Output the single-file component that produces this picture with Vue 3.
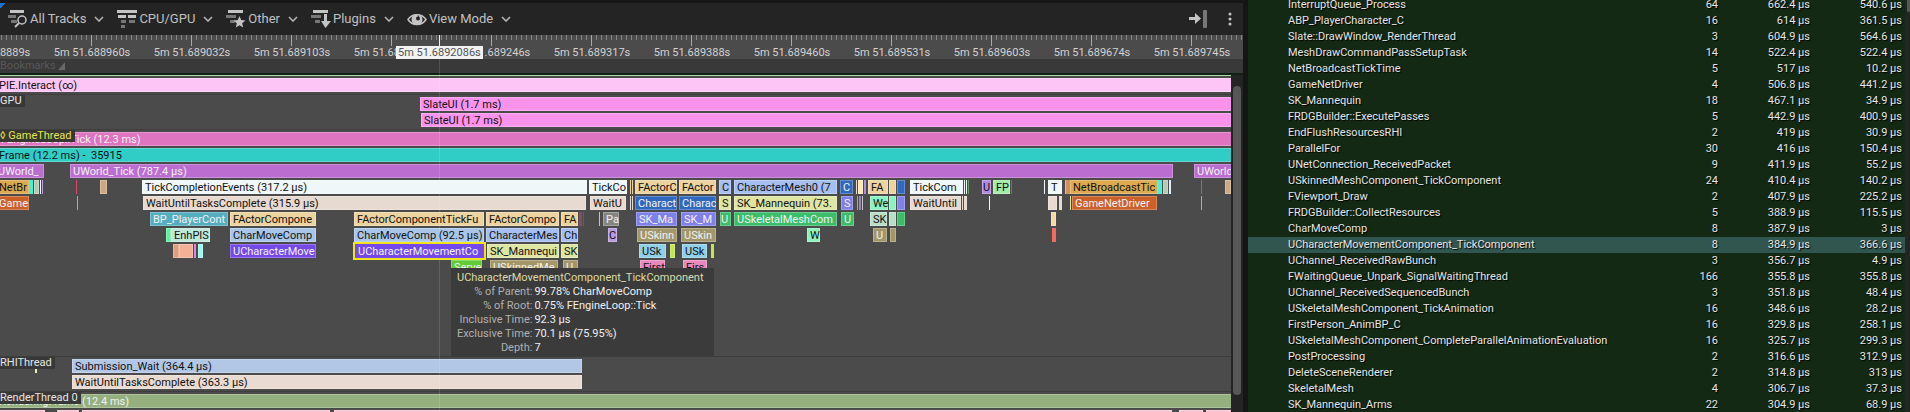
<script setup>
const SPAN = 1231

const ticks = [
  '5m 51.688889s', '5m 51.688960s', '5m 51.689032s', '5m 51.689103s', '5m 51.689175s',
  '5m 51.689246s', '5m 51.689317s', '5m 51.689388s', '5m 51.689460s', '5m 51.689531s',
  '5m 51.689603s', '5m 51.689674s', '5m 51.689745s', ''
]

// Each event: [start, end, colour, text, light text, selected]
const tan = '#ecd39f', wait = '#e7dad0', white = '#f0f7f9', blue = '#3068bd', sky = '#a6bff0'
const olive = '#a3976a', green = '#3bbd69', lime = '#dfe5a2', violet = '#7f80ea', mint = '#8bf2c0'

const tracks = [
  { id: 'pie', lanes: [[[-4, 1235, '#fdc5f5', 'PIE.Interact (∞)']]] },
  {
    id: 'gpu', label: 'GPU',
    lanes: [
      [[420, 1235, '#fb93ec', 'SlateUI (1.7 ms)']],
      [[421, 1235, '#fb93ec', 'SlateUI (1.7 ms)']]
    ]
  },
  {
    id: 'game', label: '◊ GameThread', tall: true,
    lanes: [
      [[-2, 1235, '#df74c0', 'FEngineLoop::Tick (12.3 ms)', true]],
      [[-4, 1235, '#30cdc6', 'Frame (12.2 ms) -  35915']],
      [[-5, 44, '#bb6dd0', 'UWorld_', true], [70, 1173, '#bb6dd0', 'UWorld_Tick (787.4 µs)', true], [1194, 1235, '#bb6dd0', 'UWorld', true]],
      [
        [-4, 29, '#dca850', 'NetBr'], [29, 33, '#4af0d0'], [34, 39, '#b5c9b0'], [40, 41, white], [42, 43, '#b9a0e8'],
        [76, 77, '#d84a66'], [100, 107, '#cda882'], [142, 587, white, 'TickCompletionEvents (317.2 µs)'],
        [589, 627, white, 'TickCo'], [630, 631, tan], [632, 633, tan], [635, 677, tan, 'FActorC'], [679, 716, tan, 'FActor'],
        [719, 731, sky, 'C'], [734, 837, sky, 'CharacterMesh0 (7'], [840, 853, blue, 'C', true],
        [856, 857, wait], [858, 863, '#ffe6ac'], [864, 866, '#b088e8'], [868, 888, tan, 'FA'], [889, 896, tan], [897, 905, blue],
        [910, 963, white, 'TickCom'], [964, 965, white], [966, 967, white], [968, 969, '#6a9a6a'],
        [982, 991, '#b088e0', 'U'], [993, 1010, '#a5eba8', 'FP'], [1011, 1012, '#a050b0'], [1044, 1045, white],
        [1048, 1062, white, 'T'], [1065, 1066, '#e0b0e0'], [1066, 1070, '#d09060'], [1070, 1158, '#dfa94f', 'NetBroadcastTic'],
        [1158, 1162, '#4af0d8'], [1163, 1168, '#b5c9b0'], [1169, 1171, '#d8f0ff'], [1201, 1202, '#d84a66'], [1225, 1231, '#cda882']
      ],
      [
        [-4, 29, '#cb6029', 'Game', true], [77, 78, '#a9a0e8'], [143, 586, wait, 'WaitUntilTasksComplete (315.9 µs)'],
        [590, 626, wait, 'WaitU'], [630, 631, wait], [632, 633, wait], [635, 677, blue, 'Charact', true], [679, 716, blue, 'Charac', true],
        [719, 731, lime, 'S'], [734, 837, lime, 'SK_Mannequin (73.'], [841, 853, violet, 'S', true],
        [857, 858, '#a9a0c8'], [859, 861, '#948ca8'], [862, 863, '#c8c0c8'], [870, 888, mint, 'We'], [889, 896, mint], [897, 905, violet],
        [910, 961, wait, 'WaitUntil'], [962, 963, wait], [964, 967, wait], [989, 990, white], [1048, 1057, wait], [1059, 1062, wait],
        [1070, 1071, '#d8e8a0'], [1072, 1157, '#cb6029', 'GameNetDriver', true], [1201, 1202, '#a9a0e8']
      ],
      [
        [150, 228, '#55adc0', 'BP_PlayerCont', true], [230, 316, tan, 'FActorCompone'], [354, 484, tan, 'FActorComponentTickFu'],
        [486, 559, tan, 'FActorCompo'], [561, 578, tan, 'FA'], [579, 582, '#8a4a68'], [583, 584, '#8a4a68'], [599, 600, '#7fe8c0'],
        [603, 619, '#858580', 'Pa', true], [636, 677, violet, 'SK_Ma', true], [681, 716, violet, 'SK_M', true],
        [720, 731, green, 'U', true], [734, 837, green, 'USkeletalMeshCom', true], [841, 854, green, 'U', true],
        [870, 887, '#b9dfc8', 'SK'], [889, 896, '#b9dfc8'], [897, 905, green], [1051, 1056, '#f3d9a0']
      ],
      [
        [166, 171, '#62f0a0'], [171, 210, '#bfe8da', 'EnhPIS'], [230, 316, '#a9c6e8', 'CharMoveComp'],
        [354, 484, '#a9c6e8', 'CharMoveComp (92.5 µs)'], [486, 559, sky, 'CharacterMes'], [561, 578, sky, 'Ch'], [608, 617, '#b89ae0', 'C'],
        [637, 677, olive, 'USkinn', true], [681, 716, olive, 'USkin', true], [807, 820, mint, 'W'],
        [873, 887, olive, 'U', true], [890, 896, olive], [1052, 1056, '#f86a60']
      ],
      [
        [173, 179, '#dca080'], [179, 193, '#f2b097'], [194, 196, '#dd88e0'], [198, 203, '#98f8ee'],
        [230, 316, '#7548ea', 'UCharacterMove', true], [355, 484, '#7548ea', 'UCharacterMovementCo', true, true],
        [487, 559, lime, 'SK_Mannequi'], [561, 578, lime, 'SK'], [639, 666, '#90cfe8', 'USk'], [670, 675, '#bfe850'],
        [682, 707, '#90cfe8', 'USk'], [711, 714, '#bfe850']
      ],
      [
        [451, 482, '#62cc38', 'Serve', true], [490, 558, olive, 'USkinnedMe', true], [563, 578, olive, 'U', true],
        [640, 665, '#e888bd', 'First'], [683, 707, '#e888bd', 'Firs']
      ]
    ]
  },
  {
    id: 'rhi', label: 'RHIThread', marker: true,
    lanes: [
      [[72, 582, '#b2c6e6', 'Submission_Wait (364.4 µs)']],
      [[72, 582, '#e9dbd1', 'WaitUntilTasksComplete (363.3 µs)']]
    ]
  },
  {
    id: 'render', label: 'RenderThread 0',
    lanes: [
      [[-4, 1235, '#95b07e', 'RenderingFrame (12.4 ms)', true]],
      [[-4, 45, '#f7c3d1'], [57, 79, '#f7c3d1'], [82, 330, '#f7c3d1'], [334, 1172, '#f7c3d1'], [1179, 1203, '#f7c3d1'], [1206, 1235, '#f7c3d1']]
    ]
  }
]

const place = (e) => ({
  left: (e[0] / SPAN) * 100 + '%',
  width: ((e[1] - e[0]) / SPAN) * 100 + '%',
  backgroundColor: e[2]
})

const details = [
  ['% of Parent:', '99.78% CharMoveComp'],
  ['% of Root:', '0.75% FEngineLoop::Tick'],
  ['Inclusive Time:', '92.3 µs'],
  ['Exclusive Time:', '70.1 µs (75.95%)'],
  ['Depth:', '7']
]

const timers = [
  ['InterruptQueue_Process', '64', '662.4', '540.6'],
  ['ABP_PlayerCharacter_C', '16', '614', '361.5'],
  ['Slate::DrawWindow_RenderThread', '3', '604.9', '564.6'],
  ['MeshDrawCommandPassSetupTask', '14', '522.4', '522.4'],
  ['NetBroadcastTickTime', '5', '517', '10.2'],
  ['GameNetDriver', '4', '506.8', '441.2'],
  ['SK_Mannequin', '18', '467.1', '34.9'],
  ['FRDGBuilder::ExecutePasses', '5', '442.9', '400.9'],
  ['EndFlushResourcesRHI', '2', '419', '30.9'],
  ['ParallelFor', '30', '416', '150.4'],
  ['UNetConnection_ReceivedPacket', '9', '411.9', '55.2'],
  ['USkinnedMeshComponent_TickComponent', '24', '410.4', '140.2'],
  ['FViewport_Draw', '2', '407.9', '225.2'],
  ['FRDGBuilder::CollectResources', '5', '388.9', '115.5'],
  ['CharMoveComp', '8', '387.9', '3'],
  ['UCharacterMovementComponent_TickComponent', '8', '384.9', '366.6'],
  ['UChannel_ReceivedRawBunch', '3', '356.7', '4.9'],
  ['FWaitingQueue_Unpark_SignalWaitingThread', '166', '355.8', '355.8'],
  ['UChannel_ReceivedSequencedBunch', '3', '351.8', '48.4'],
  ['USkeletalMeshComponent_TickAnimation', '16', '348.6', '28.2'],
  ['FirstPerson_AnimBP_C', '16', '329.8', '258.1'],
  ['USkeletalMeshComponent_CompleteParallelAnimationEvaluation', '16', '325.7', '299.3'],
  ['PostProcessing', '2', '316.6', '312.9'],
  ['DeleteSceneRenderer', '2', '314.8', '313'],
  ['SkeletalMesh', '4', '306.7', '37.3'],
  ['SK_Mannequin_Arms', '22', '304.9', '68.9']
]
const selectedTimer = 'UCharacterMovementComponent_TickComponent'

const menus = ['All Tracks', 'CPU/GPU', 'Other', 'Plugins', 'View Mode']
</script>

<template>
  <main class="insights">
    <section class="timing">
      <header class="toolbar">
        <button v-for="(m, i) in menus" :key="m" type="button" class="menu">
          <svg class="icon" viewBox="0 0 20 20" width="20" height="20" aria-hidden="true">
            <g v-if="i === 0">
              <path d="M2 1h14v3H2z" fill="#c4c4c4" /><path d="M0 6h8v3H0zM3 11h6v3H3z" fill="#777" />
              <circle cx="14" cy="11" r="4" fill="none" stroke="#c4c4c4" stroke-width="1.5" />
              <path d="M11 14l-4 4" stroke="#c4c4c4" stroke-width="2" />
            </g>
            <g v-else-if="i === 1">
              <path d="M0 1h20v3H0zM1 6h8v3H1zM11 6h8v3h-8z" fill="#c4c4c4" />
              <path d="M4 11h5v3H4zM12 11h6v3h-6zM4 16h4v3H4z" fill="#777" />
            </g>
            <g v-else-if="i === 2">
              <path d="M2 1h15v3H2z" fill="#c4c4c4" /><path d="M0 6h10v3H0zM4 11h5v3H4z" fill="#777" />
              <path d="M13.500 7l1.700 4 4.300.400-3.300 2.900 1 4.200-3.700-2.200-3.700 2.200 1-4.200-3.300-2.900 4.300-.400z" fill="#c4c4c4" />
            </g>
            <g v-else-if="i === 3">
              <path d="M2 1h15v3H2z" fill="#c4c4c4" /><path d="M0 6h10v3H0zM4 11h5v3H4z" fill="#777" />
              <path d="M13 5h3v7h4l-5.500 7L10 12h3z" fill="#c4c4c4" />
            </g>
            <g v-else>
              <path d="M1 10.500c4-6.500 14-6.500 18 0-4 6.500-14 6.500-18 0z" fill="none" stroke="#c4c4c4" stroke-width="1.500" />
              <path d="M10 5a5.500 5.500 0 1 0 5.500 5.500c0-2-1-4-3-5L11.500 9z" fill="#c4c4c4" />
              <circle cx="11" cy="9.500" r="2" fill="#242424" />
            </g>
          </svg>
          <span class="menu-text">{{ m }}</span>
          <svg viewBox="0 0 10 6" width="10" height="6" aria-hidden="true"><path d="M1 1l4 4 4-4" fill="none" stroke="#b4b4b4" stroke-width="1.6" /></svg>
        </button>
        <span class="spacer"></span>
        <button type="button" class="tool" aria-label="Auto scroll">
          <svg viewBox="0 0 20 18" width="20" height="18" aria-hidden="true">
            <path d="M0 7h6V3l6 5.500L6 14v-4H0z" fill="#c4c4c4" /><rect x="14" width="4" height="18" rx="1" fill="#777" />
          </svg>
        </button>
        <button type="button" class="tool" aria-label="More options">
          <svg viewBox="0 0 4 14" width="4" height="14" aria-hidden="true">
            <circle cx="2" cy="2" r="1.500" fill="#c4c4c4" /><circle cx="2" cy="7" r="1.500" fill="#c4c4c4" /><circle cx="2" cy="12" r="1.500" fill="#c4c4c4" />
          </svg>
        </button>
      </header>

      <div class="chart">
        <div class="ruler">
          <span v-for="(t, i) in ticks" :key="i" class="tick">{{ t }}</span>
        </div>
        <div class="bookmarks">Bookmarks<svg viewBox="0 0 8 8" width="8" height="8" aria-hidden="true"><path d="M7 0v8H0z" fill="#686868" /></svg></div>
        <div class="body">
          <div class="tracks">
            <div class="regions"></div>
            <div v-for="t in tracks" :key="t.id" class="track" :class="[t.id, { tall: t.tall }]">
              <div v-for="(lane, l) in t.lanes" :key="l" class="lane">
                <div
                  v-for="(e, n) in lane" :key="n" class="event"
                  :class="{ light: e[4], selected: e[5], tight: e[1] - e[0] < 12, sliver: e[1] - e[0] < 5 }" :style="place(e)"
                >{{ e[3] }}</div>
              </div>
              <span v-if="t.marker" class="marker"></span>
              <span v-if="t.label" class="label">{{ t.label }}</span>
            </div>
          </div>
          <div class="scroll"><div class="thumb"></div></div>
        </div>
        <div class="cursor"></div>
        <div class="stamp">5m 51.6892086s</div>
        <div class="tooltip" role="tooltip">
          <div class="tip-title">UCharacterMovementComponent_TickComponent</div>
          <dl class="tip-grid">
            <template v-for="d in details" :key="d[0]"><dt>{{ d[0] }}</dt><dd>{{ d[1] }}</dd></template>
          </dl>
        </div>
      </div>
    </section>

    <div class="splitter"></div>

    <section class="timers">
      <table>
        <colgroup><col /><col class="c-count" /><col class="c-time" /><col class="c-time" /></colgroup>
        <tbody>
          <tr v-for="r in timers" :key="r[0]" :class="{ current: r[0] === selectedTimer }">
            <td class="name">{{ r[0] }}</td><td>{{ r[1] }}</td><td>{{ r[2] }} µs</td><td>{{ r[3] }} µs</td>
          </tr>
        </tbody>
      </table>
      <div class="side"><div class="side-thumb"></div></div>
    </section>
  </main>
</template>

<style>
body { background: #151515; }
</style>

<style scoped>
.insights {
  display: grid;
  grid-template-columns: minmax(0, 1243fr) 5px minmax(0, 662fr);
  height: 100vh;
  overflow: hidden;
  font-family: Roboto, "Liberation Sans", sans-serif;
  font-size: 11px;
  line-height: 14px;
  color: #e6e6e6;
}
.timing { display: flex; flex-direction: column; min-height: 0; border-top: 3px solid #151515; }
.toolbar {
  display: flex;
  align-items: center;
  gap: 13px;
  height: 32px;
  flex: none;
  padding: 0 11px 0 8px;
  background: linear-gradient(135deg, #1673d4 4px, #242424 4px);
}
button { font: inherit; color: inherit; background: none; border: 0; padding: 0; display: flex; align-items: center; }
.menu { gap: 2px; font-size: 13px; color: #c0c0c0; }
.menu-text { margin-right: 6px; white-space: nowrap; }
.spacer { flex: 1; }
.tool { margin-left: 6px; }
.chart { position: relative; flex: 1; min-height: 0; display: flex; flex-direction: column; overflow: hidden; }
.ruler { display: flex; height: 24px; flex: none; overflow: hidden; background: #4b4b4b; color: #d2d2d2; }
.tick {
  flex: none;
  box-sizing: border-box;
  width: 100px;
  padding: 11px 0 0 2px;
  text-align: center;
  background:
    linear-gradient(#a8a8a8, #a8a8a8) 50px 0 / 1px 11px no-repeat,
    repeating-linear-gradient(90deg, #858585 0 1px, transparent 1px 5px) 0 0 / 100% 5px no-repeat;
}
.tick:first-child { margin-left: -59px; }
.bookmarks {
  display: flex;
  align-items: center;
  gap: 2px;
  height: 14px;
  flex: none;
  background: #393939;
  border-bottom: 2px solid #102014;
  color: #585858;
}
.body { display: flex; flex: 1; min-height: 0; }
.tracks { flex: 1; min-width: 0; overflow: hidden; background: #4b4b4b; }
.regions { height: 1px; background: #a9dfa4; }
.track { position: relative; overflow: hidden; padding: 2px 0 0; border-top: 1px solid #3d3d3d; }
.pie { border-top: 0; }
.tall { min-height: 224px; }
.lane { position: relative; height: 14px; margin-bottom: 2px; }
.event {
  position: absolute;
  top: 0;
  height: 14px;
  box-sizing: border-box;
  padding-left: 3px;
  overflow: hidden;
  line-height: 16px;
  white-space: pre;
  color: #111;
  box-shadow: inset 0 0 0 1px rgba(255, 255, 255, 0.25);
}
.event.tight { padding-left: 1px; }
.event.sliver { padding: 0; box-shadow: none; }
.event.light { color: #f2f2f2; }
.event.selected { z-index: 1; box-shadow: 0 0 0 2px #f2e41c; }
.label {
  position: absolute;
  z-index: 2;
  top: 0;
  left: 0;
  padding-right: 3px;
  line-height: 12px;
  background: #383838;
  white-space: nowrap;
}
.game .label { background: #383830; color: #e4e455; }
.marker { position: absolute; left: 35px; top: 12px; width: 2px; height: 4px; background: #e8f0b8; }
.scroll { width: 12px; flex: none; padding: 11px 2px 17px; box-sizing: border-box; background: #242424; }
.thumb { height: 100%; border-radius: 4px; background: #575757; }
.cursor {
  position: absolute;
  left: 439px;
  top: 0;
  bottom: 0;
  width: 1px;
  background: linear-gradient(#f0f0f0 11px, rgba(255, 255, 255, 0.12) 11px);
}
.stamp { position: absolute; left: 396px; top: 11px; padding: 0 2px; line-height: 13px; background: #f2f2f2; color: #555; }
.tooltip { position: absolute; z-index: 3; left: 451px; top: 233px; padding: 3px 10px 2px 6px; background: #3b3b3b; }
.tip-title { color: #dcdcaa; }
.tip-grid { display: grid; grid-template-columns: auto auto; justify-content: start; column-gap: 2px; margin: 0; }
dt { text-align: right; color: #b0b0b0; }
dd { margin: 0; color: #f0f0f0; }
.splitter { background: #151515; }
.timers { display: flex; align-items: flex-start; overflow: hidden; background: #132913; }
table { flex: 1; min-width: 0; margin-top: -3px; table-layout: fixed; border-collapse: collapse; }
td { height: 16px; padding: 0 3px 0 0; line-height: 16px; text-align: right; white-space: nowrap; text-shadow: 1px 1px 1px #000; }
.name { padding-left: 40px; text-align: left; overflow: hidden; }
.c-count { width: 93px; }
.c-time { width: 92px; }
.current { background: #30564f; }
.side { width: 5px; height: 100%; background: #242424; }
.side-thumb { height: 12px; width: 3px; margin-left: auto; background: #575757; border-radius: 0 0 2px 2px; }
</style>
